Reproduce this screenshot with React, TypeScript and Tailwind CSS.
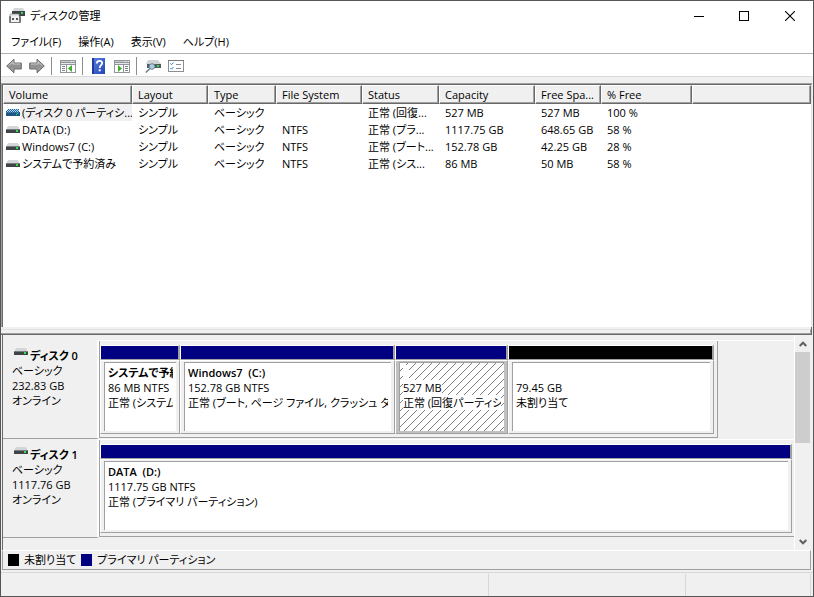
import React from 'react';

interface Volume {
  name: string;
  fs: string;
  status: string;
  capacity: string;
  free: string;
  percent: string;
  selected?: boolean;
}

interface Partition {
  title: string;
  size: string;
  status: string;
  width: string;
  kind: 'primary' | 'unallocated';
  selected?: boolean;
}

interface Disk {
  name: string;
  size: string;
  box: string;
  partitions: Partition[];
}

const MENUS = ['ファイル(F)', '操作(A)', '表示(V)', 'ヘルプ(H)'];

const COLUMNS = [
  { label: 'Volume', width: 'w-[129px]' },
  { label: 'Layout', width: 'w-[76px]' },
  { label: 'Type', width: 'w-[68px]' },
  { label: 'File System', width: 'w-[86px]' },
  { label: 'Status', width: 'w-[77px]' },
  { label: 'Capacity', width: 'w-[96px]' },
  { label: 'Free Spa...', width: 'w-[66px]' },
  { label: '% Free', width: 'w-[91px]' },
];

const VOLUMES: Volume[] = [
  { name: '(ディスク 0 パーティシ...', fs: '', status: '正常 (回復...', capacity: '527 MB', free: '527 MB', percent: '100 %', selected: true },
  { name: 'DATA (D:)', fs: 'NTFS', status: '正常 (プラ...', capacity: '1117.75 GB', free: '648.65 GB', percent: '58 %' },
  { name: 'Windows7 (C:)', fs: 'NTFS', status: '正常 (ブート...', capacity: '152.78 GB', free: '42.25 GB', percent: '28 %' },
  { name: 'システムで予約済み', fs: 'NTFS', status: '正常 (シス...', capacity: '86 MB', free: '50 MB', percent: '58 %' },
];

const DISKS: Disk[] = [
  {
    name: 'ディスク 0',
    size: '232.83 GB',
    box: 'w-[619px] border-r pr-[3px]',
    partitions: [
      { title: 'システムで予約', size: '86 MB NTFS', status: '正常 (システム', width: 'w-20', kind: 'primary' },
      { title: 'Windows7  (C:)', size: '152.78 GB NTFS', status: '正常 (ブート, ページ ファイル, クラッシュ ダンプ', width: 'w-[215px]', kind: 'primary' },
      { title: '  ', size: '527 MB', status: '正常 (回復パーティシ', width: 'w-[113px]', kind: 'primary', selected: true },
      { title: '', size: '79.45 GB', status: '未割り当て', width: 'flex-1', kind: 'unallocated' },
    ],
  },
  {
    name: 'ディスク 1',
    size: '1117.76 GB',
    box: 'flex-1 pr-[2px]',
    partitions: [
      { title: 'DATA  (D:)', size: '1117.75 GB NTFS', status: '正常 (プライマリ パーティション)', width: 'flex-1', kind: 'primary' },
    ],
  },
];

function DriveIcon({ selected = false }: { selected?: boolean }) {
  return (
    <svg width="14" height="8" viewBox="0 0 14 8" className="shrink-0" shapeRendering="crispEdges" aria-hidden="true">
      <path d="M2 0h10l2 4H0z" fill="#d3d6d8" />
      <rect y="3" width="14" height="4" fill="#3f4447" />
      <rect y="3" width="14" height="1" fill="#777b7e" />
      <rect x="10" y="4" width="2" height="2" fill="#2fe04a" />
      {selected && (
        <>
          <defs>
            <pattern id="dither" width="2" height="2" patternUnits="userSpaceOnUse">
              <rect width="1" height="1" fill="#0067c0" />
              <rect x="1" y="1" width="1" height="1" fill="#0067c0" />
            </pattern>
          </defs>
          <path d="M1 0h12l1 4v3H0V4z" fill="url(#dither)" />
        </>
      )}
    </svg>
  );
}

function AppIcon() {
  return (
    <svg width="16" height="16" viewBox="0 0 16 16" aria-hidden="true">
      <path d="M5 0h9l2 4H3z" fill="#d5d8da" />
      <rect x="3" y="3" width="13" height="5" fill="#3f4447" />
      <rect x="12" y="4" width="2" height="2" fill="#2fe04a" />
      <rect x="1" y="6" width="9" height="3" fill="#e4e4e4" stroke="#8a8a8a" strokeWidth=".6" />
      <rect x="0" y="8" width="12" height="7" rx="1" fill="#77797b" />
      <path d="M2 8h8v6H2z" fill="#f2f2f2" />
      <rect x="3" y="10" width="2" height="2" fill="#555" />
      <rect x="7" y="10" width="2" height="2" fill="#555" />
    </svg>
  );
}

function Arrow({ forward = false }: { forward?: boolean }) {
  return (
    <svg width="16" height="16" viewBox="0 0 16 16" className={forward ? '-scale-x-100' : ''} aria-hidden="true">
      <defs>
        <linearGradient id="metal" x1="0" y1="0" x2="0" y2="1">
          <stop offset="0" stopColor="#b9b9b9" />
          <stop offset=".5" stopColor="#8e8e8e" />
          <stop offset="1" stopColor="#a9a9a9" />
        </linearGradient>
      </defs>
      <path d="M.7 8 8 1.2V5h7.3v6H8v3.8z" fill="url(#metal)" stroke="#6a6a6a" />
      <path d="M2.4 8 7 3.6V6h7.2" fill="none" stroke="#d0d0d0" strokeWidth=".8" />
    </svg>
  );
}

function PaneIcon({ flipped = false }: { flipped?: boolean }) {
  return (
    <svg width="16" height="16" viewBox="0 0 16 16" className={flipped ? '-scale-x-100' : ''} shapeRendering="crispEdges" aria-hidden="true">
      <rect y="2" width="16" height="13" fill="#8f959b" />
      <rect x="1" y="3" width="14" height="1" fill="#c4c8cc" />
      <rect x={flipped ? 1 : 11} y="3" width="1" height="1" fill="#fff" />
      <rect x={flipped ? 4 : 13} y="3" width="1" height="1" fill="#fff" />
      <rect x="1" y="5" width="14" height="1" fill="#e8e8e8" />
      <rect x="1" y="7" width="5" height="7" fill="#fff" />
      <rect x="7" y="7" width="8" height="7" fill="#fff" />
      <rect x="2" y="8" width="3" height="1" fill="#7d858c" />
      <rect x="2" y="10" width="3" height="1" fill="#7d858c" />
      <rect x="2" y="12" width="3" height="1" fill="#7d858c" />
      <path d="M8 10.5 12 7v7z" fill="#3fae2a" shapeRendering="auto" />
    </svg>
  );
}

function HelpIcon() {
  return (
    <svg width="16" height="16" viewBox="0 0 16 16" aria-hidden="true">
      <defs>
        <linearGradient id="help" x1="0" y1="0" x2="1" y2="1">
          <stop offset="0" stopColor="#5d82e4" />
          <stop offset="1" stopColor="#2146b4" />
        </linearGradient>
      </defs>
      <rect x="1" y="0" width="13" height="16" fill="url(#help)" />
      <rect x="1" y="0" width="2" height="16" fill="#1d3c9c" />
      <path d="M5.8 5.6C5.8 2 11.4 2.2 11.2 5.3 11.1 7.2 8.7 7.4 8.7 10" fill="none" stroke="#fff" strokeWidth="1.8" />
      <rect x="7.7" y="11.3" width="2" height="2" fill="#fff" />
    </svg>
  );
}

function RescanIcon() {
  return (
    <svg width="16" height="16" viewBox="0 0 16 16" aria-hidden="true">
      <path d="M3 2h10l3 4H1z" fill="#cfd3d6" />
      <rect x="2" y="6" width="14" height="4" fill="#55595c" />
      <rect x="12" y="7" width="2" height="2" fill="#2fe04a" />
      <path d="M.8 14.5 5 10.5" stroke="#6f7f8c" strokeWidth="1.6" />
      <circle cx="7" cy="8.5" r="2.8" fill="#a9cde4" stroke="#6f8797" />
    </svg>
  );
}

function ListIcon() {
  return (
    <svg width="16" height="16" viewBox="0 0 16 16" aria-hidden="true">
      <rect x=".5" y="2.5" width="15" height="11" fill="#fff" stroke="#8b8f93" />
      <rect x="0" y="2" width="16" height="1" fill="#777b7f" />
      <path d="m2.5 5.5 1 1.2 2-2.2M2.5 10l1 1.2 2-2.2" fill="none" stroke="#2b83d6" />
      <path d="M8 6.5h5M8 10.5h5" stroke="#8a8e92" />
    </svg>
  );
}

function ToolButton({ label, children }: { label: string; children: React.ReactNode }) {
  return (
    <button type="button" aria-label={label} className="size-4">
      {children}
    </button>
  );
}

function Separator() {
  return <div className="-ml-px mr-px h-[18px] w-px bg-[#8d8d8d]" />;
}

function TitleBar() {
  return (
    <header className="flex h-[29px] items-center justify-between pl-2">
      <div className="flex items-center gap-[5px] pt-px">
        <AppIcon />
        <h1>ディスクの管理</h1>
      </div>
      <div className="flex h-full">
        <button type="button" aria-label="最小化" className="grid w-11 place-items-center">
          <svg width="10" height="10" shapeRendering="crispEdges"><path d="M0 5h10v1H0z" /></svg>
        </button>
        <button type="button" aria-label="最大化" className="grid w-[46px] place-items-center">
          <svg width="10" height="10"><rect x=".5" y=".5" width="9" height="9" fill="none" stroke="#000" /></svg>
        </button>
        <button type="button" aria-label="閉じる" className="grid w-[46px] place-items-center">
          <svg width="10" height="10"><path d="m0 0 10 10M10 0 0 10" stroke="#000" strokeWidth="1.1" /></svg>
        </button>
      </div>
    </header>
  );
}

function Toolbar() {
  return (
    <div className="flex h-[22px] items-center gap-[7px] pl-[5px] pt-[2px]">
      <ToolButton label="戻る"><Arrow /></ToolButton>
      <ToolButton label="進む"><Arrow forward /></ToolButton>
      <Separator />
      <ToolButton label="コンソール ツリー"><PaneIcon /></ToolButton>
      <Separator />
      <ToolButton label="ヘルプ"><HelpIcon /></ToolButton>
      <ToolButton label="操作ウィンドウ"><PaneIcon flipped /></ToolButton>
      <Separator />
      <ToolButton label="再スキャン"><RescanIcon /></ToolButton>
      <ToolButton label="設定"><ListIcon /></ToolButton>
    </div>
  );
}

function VolumeTable() {
  const th =
    'h-[19px] border border-b-[#696969] border-l-white border-r-[#696969] border-t-white bg-[#f0f0f0] px-[5px] text-left font-normal shadow-[inset_-1px_-1px_0_#a0a0a0]';
  const td = 'h-[17px] overflow-hidden px-[6px]';
  return (
    <table className="w-full table-fixed border-separate border-spacing-0 whitespace-nowrap leading-[17px]">
      <colgroup>
        {COLUMNS.map((c) => (
          <col key={c.label} className={c.width} />
        ))}
        <col />
      </colgroup>
      <thead>
        <tr>
          {COLUMNS.map((c) => (
            <th key={c.label} scope="col" className={th}>{c.label}</th>
          ))}
          <td className={th} />
        </tr>
      </thead>
      <tbody>
        {VOLUMES.map((v) => (
          <tr key={v.name}>
            <td className="h-[17px] overflow-hidden pl-[3px]">
              <div className="flex items-center">
                <DriveIcon selected={v.selected} />
                <span className={v.selected ? 'flex-1 bg-[#f0f0f0] pl-[2px]' : 'pl-[2px]'}>{v.name}</span>
              </div>
            </td>
            <td className={td}>シンプル</td>
            <td className={td}>ベーシック</td>
            <td className={td}>{v.fs}</td>
            <td className={td}>{v.status}</td>
            <td className={td}>{v.capacity}</td>
            <td className={td}>{v.free}</td>
            <td className={td}>{v.percent}</td>
            <td />
          </tr>
        ))}
      </tbody>
    </table>
  );
}

function Hatch() {
  return (
    <svg className="absolute inset-0 size-full" aria-hidden="true">
      <defs>
        <pattern id="hatch" width="8" height="8" patternUnits="userSpaceOnUse">
          <path
            d="M0 7h1v1H0zM1 6h1v1H1zM2 5h1v1H2zM3 4h1v1H3zM4 3h1v1H4zM5 2h1v1H5zM6 1h1v1H6zM7 0h1v1H7z"
            fill="#808080"
            shapeRendering="crispEdges"
          />
        </pattern>
      </defs>
      <rect width="100%" height="100%" fill="url(#hatch)" />
    </svg>
  );
}

function PartitionBox({ p }: { p: Partition }) {
  const bar = p.kind === 'primary' ? 'bg-[#000080]' : 'bg-black';
  const face = p.selected ? 'bg-[#c0c0c0]' : 'bg-[#f0f0f0]';
  const line = p.selected ? 'bg-white' : '';
  return (
    <div className={`flex min-w-0 flex-col ${p.width}`}>
      <div className={`h-[15px] border border-r-2 border-b-[#a0a0a0] border-l-white border-r-[#a0a0a0] border-t-white ${bar}`} />
      <div className={`flex h-[74px] border border-b-[#a0a0a0] border-l-white border-r-[#a0a0a0] border-t-white pb-[2px] pl-[3px] pr-[3px] pt-px ${face}`}>
        <div className="relative min-w-0 flex-1 overflow-hidden border-l border-t border-[#a0a0a0] bg-white px-[3px] pt-[2px]">
          {p.selected && <Hatch />}
          <div className="relative overflow-hidden whitespace-pre leading-[15px]">
            <div className="h-[15px] font-semibold"><span className={line}>{p.title}</span></div>
            <div className="h-[15px]"><span className={line}>{p.size}</span></div>
            <div className="h-[15px]"><span className={line}>{p.status}</span></div>
          </div>
        </div>
      </div>
    </div>
  );
}

function DiskRow({ disk }: { disk: Disk }) {
  return (
    <section className="flex h-[99px]">
      <div className="w-24 shrink-0 border-b border-r-2 border-b-[#a0a0a0] border-r-white pl-[9px] pt-2 leading-[15px]">
        <div className="flex gap-[2px] pl-[2px]">
          <DriveIcon />
          <h2 className="font-semibold">{disk.name}</h2>
        </div>
        <p>ベーシック</p>
        <p>{disk.size}</p>
        <p>オンライン</p>
      </div>
      <div className="flex min-w-0 flex-1 border-t border-white">
        <div className={`mb-px flex border-b border-l border-[#a0a0a0] pt-1 ${disk.box}`}>
          {disk.partitions.map((p) => (
            <PartitionBox key={p.size} p={p} />
          ))}
        </div>
      </div>
    </section>
  );
}

function ScrollBar() {
  return (
    <div className="flex w-4 shrink-0 flex-col border-l border-white">
      <button type="button" aria-label="上へスクロール" className="grid h-[17px] place-items-center">
        <svg width="8" height="6" fill="none" stroke="#606060" strokeWidth="2"><path d="m.7 5 3.3-3.3L7.3 5" /></svg>
      </button>
      <div className="h-[91px] bg-[#cdcdcd]" />
      <button type="button" aria-label="下へスクロール" className="mt-auto grid h-[17px] place-items-center">
        <svg width="8" height="6" fill="none" stroke="#606060" strokeWidth="2"><path d="M.7 1 4 4.3 7.3 1" /></svg>
      </button>
    </div>
  );
}

export default function App() {
  return (
    <div className="flex min-h-screen flex-col border border-[#555] bg-[#f0f0f0] font-['Open_Sans','Noto_Sans_CJK_JP',sans-serif] text-[11px] text-black [font-feature-settings:'palt']">
      <div className="bg-white">
        <TitleBar />
        <nav className="flex h-6 items-center gap-[17px] border-b border-[#b0b0b0] pl-[10px] pt-px">
          {MENUS.map((m) => (
            <button key={m} type="button">{m}</button>
          ))}
        </nav>
        <Toolbar />
      </div>
      <main className="mr-px flex flex-1 flex-col border-t border-[#dadada] pt-[6px]">
        <div className="flex flex-1 border-l border-t border-[#a0a0a0]">
          <div className="flex-1 border-l border-r border-t border-l-[#696969] border-r-[#e3e3e3] border-t-[#696969] bg-white">
            <VolumeTable />
          </div>
        </div>
        <div className="h-2 border-b border-r border-[#696969] pt-[2px]">
          <div className="h-[5px] border-b border-r border-t border-b-[#a0a0a0] border-r-[#a0a0a0] border-t-[#e3e3e3]" />
        </div>
        <div className="ml-px flex border-l border-[#696969] pr-[2px]">
          <div className="min-w-0 flex-1 pb-3 pt-[5px]">
            {DISKS.map((d) => (
              <DiskRow key={d.name} disk={d} />
            ))}
          </div>
          <ScrollBar />
        </div>
        <div className="ml-px mr-px flex h-5 items-center gap-[5px] border border-[#a0a0a0] border-t-white pl-[5px]">
          <span className="h-3 w-[11px] bg-black" />
          <span>未割り当て</span>
          <span className="h-3 w-[11px] bg-[#000080]" />
          <span>プライマリ パーティション</span>
        </div>
      </main>
      <footer className="mt-[2px] flex h-6 border-t border-[#d7d7d7] pr-[2px] pt-px">
        <div className="flex-1 border-r border-[#d7d7d7]" />
        <div className="w-[197px] border-r border-[#d7d7d7]" />
        <div className="w-[125px] border-r border-[#d7d7d7]" />
      </footer>
    </div>
  );
}
